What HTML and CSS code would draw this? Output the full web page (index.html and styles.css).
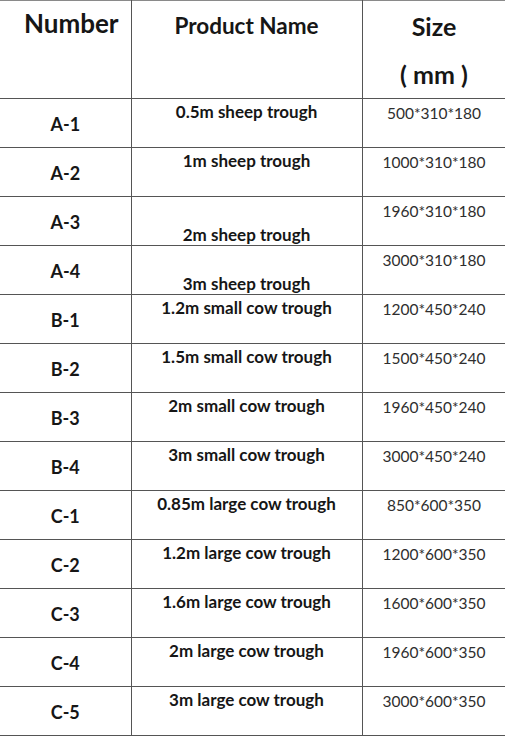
FILE: index.html
```html
<!DOCTYPE html>
<html>
<head>
<meta charset="utf-8">
<link rel="stylesheet" href="styles.css">
</head>
<body>
<table class="spec">
  <colgroup>
    <col class="c-num">
    <col class="c-name">
    <col class="c-size">
  </colgroup>
  <thead>
    <tr class="head">
      <th class="h-num">Number</th>
      <th class="h-name">Product Name</th>
      <th class="h-size">Size<br>( mm )</th>
    </tr>
  </thead>
  <tbody>
    <tr><td class="num">A-1</td><td class="name">0.5m sheep trough</td><td class="size">500*310*180</td></tr>
    <tr><td class="num">A-2</td><td class="name">1m sheep trough</td><td class="size">1000*310*180</td></tr>
    <tr><td class="num">A-3</td><td class="name low">2m sheep trough</td><td class="size">1960*310*180</td></tr>
    <tr><td class="num">A-4</td><td class="name low">3m sheep trough</td><td class="size">3000*310*180</td></tr>
    <tr><td class="num">B-1</td><td class="name">1.2m small cow trough</td><td class="size">1200*450*240</td></tr>
    <tr><td class="num">B-2</td><td class="name">1.5m small cow trough</td><td class="size">1500*450*240</td></tr>
    <tr><td class="num">B-3</td><td class="name">2m small cow trough</td><td class="size">1960*450*240</td></tr>
    <tr><td class="num">B-4</td><td class="name">3m small cow trough</td><td class="size">3000*450*240</td></tr>
    <tr><td class="num">C-1</td><td class="name">0.85m large cow trough</td><td class="size">850*600*350</td></tr>
    <tr><td class="num">C-2</td><td class="name">1.2m large cow trough</td><td class="size">1200*600*350</td></tr>
    <tr><td class="num">C-3</td><td class="name">1.6m large cow trough</td><td class="size">1600*600*350</td></tr>
    <tr><td class="num">C-4</td><td class="name">2m large cow trough</td><td class="size">1960*600*350</td></tr>
    <tr><td class="num">C-5</td><td class="name">3m large cow trough</td><td class="size">3000*600*350</td></tr>
  </tbody>
</table>
</body>
</html>
```

FILE: styles.css
```css
html, body {
  margin: 0;
  padding: 0;
  background: #ffffff;
}

body {
  font-family: Lato, "Open Sans", "Liberation Sans", sans-serif;
  color: #161616;
}

.spec {
  border-collapse: collapse;
  table-layout: fixed;
  width: 506px;
}

.c-num { width: 131px; }
.c-name { width: 231px; }
.c-size { width: 144px; }

th,
td {
  border: 1px solid #555555;
  padding: 0;
  text-align: center;
  box-sizing: border-box;
}

.head th { border-top-color: #8a8a8a; }
.h-num,
.num { border-left-style: none; }
.h-size,
.size { border-right-color: #c8c8c8; }

.head { height: 97px; }

.head th {
  vertical-align: top;
  font-weight: 700;
}

.head .h-num {
  font-size: 26px;
  line-height: 30px;
  padding-top: 7px;
  padding-left: 12px;
}

.head .h-name {
  font-size: 22.5px;
  line-height: 30px;
  padding-top: 10px;
}

.head .h-size {
  font-size: 25px;
  line-height: 48px;
  padding-top: 1px;
}

.spec tbody tr { height: 49px; }

.num {
  font-size: 18px;
  font-weight: 700;
  vertical-align: middle;
  padding-top: 2px;
}

.name {
  font-size: 17px;
  font-weight: 700;
  line-height: 20px;
  vertical-align: top;
  padding-top: 3px;
}

.name.low {
  vertical-align: bottom;
  padding-top: 0;
  padding-bottom: 0;
}

.size {
  font-size: 15.5px;
  font-weight: 400;
  line-height: 20px;
  color: #2e2e2e;
  vertical-align: top;
  padding-top: 4px;
}
```
